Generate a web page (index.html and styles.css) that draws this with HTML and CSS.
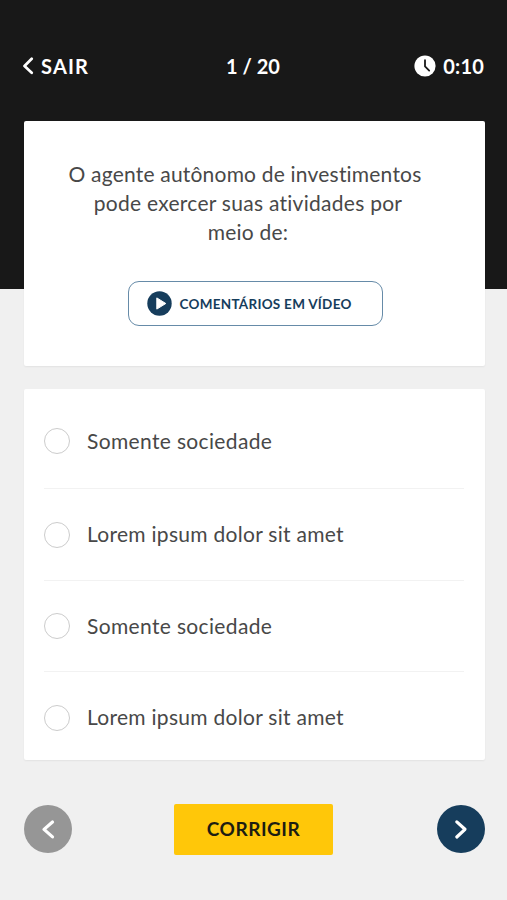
FILE: index.html
```html
<!DOCTYPE html>
<html lang="pt-BR">
<head>
<meta charset="utf-8">
<title>Simulado</title>
<link rel="stylesheet" href="styles.css">
</head>
<body>
<header class="topbar">
  <a class="exit"><svg width="12" height="18" viewBox="0 0 12 18"><path d="M9.700 1.700 2.500 9l7.200 6.800"/></svg><span class="t-exit">SAIR</span></a>
  <span class="t-count">1 / 20</span>
  <span class="timer"><svg width="22" height="22" viewBox="0 0 22 22"><circle cx="11" cy="11" r="10.6"/><path d="M11 5.2v6.2l4.2 4.2"/></svg><span class="t-time">0:10</span></span>
</header>
<main>
  <section class="card question">
    <h1><span class="q1">O agente autônomo de investimentos</span><span class="q2">pode exercer suas atividades por</span><span class="q3">meio de:</span></h1>
    <button class="video"><svg width="25" height="25" viewBox="0 0 25 25"><circle cx="12.5" cy="12.5" r="12.2"/><path d="M9.8 6.9v11.2l9-5.6z"/></svg><span class="t-video">COMENTÁRIOS EM VÍDEO</span></button>
  </section>
  <section class="card options">
    <label class="option first"><i class="radio"></i><span class="short">Somente sociedade</span></label>
    <label class="option"><i class="radio"></i><span class="long">Lorem ipsum dolor sit amet</span></label>
    <label class="option"><i class="radio"></i><span class="short">Somente sociedade</span></label>
    <label class="option last"><i class="radio"></i><span class="long">Lorem ipsum dolor sit amet</span></label>
  </section>
</main>
<footer class="actions">
  <button class="round prev"><svg width="48" height="48" viewBox="0 0 48 48"><path d="M28.500 17 20 24.400l8.500 7.500"/></svg></button>
  <button class="submit"><span class="t-submit">CORRIGIR</span></button>
  <button class="round next"><svg width="48" height="48" viewBox="0 0 48 48"><path d="M19.800 16.900 28 24.300l-8.200 7.700"/></svg></button>
</footer>
</body>
</html>
```
FILE: styles.css
```css
* { box-sizing: border-box; }
body {
  margin: 0;
  height: 900px;
  padding: 0 22px 0 24px;
  background: linear-gradient(#181818 289px, #f0f0f0 289px);
  font-family: Lato, "Noto Sans", sans-serif;
  font-variant-ligatures: none;
  color: #484848;
}
button { border: 0; padding: 0; font: inherit; background: none; }
svg { display: block; flex: none; }
span { white-space: nowrap; }
.topbar {
  height: 121px;
  padding: 53px 1px 42px 0;
  display: grid;
  grid-template-columns: 1fr auto 1fr;
  align-items: center;
  color: #fff;
  font-size: 20px;
  font-weight: 700;
  line-height: 26px;
}
.exit, .timer { display: flex; align-items: center; }
.exit { gap: 7px; margin-left: -2px; }
.exit path { fill: none; stroke: #fff; stroke-width: 2.7; stroke-linecap: round; stroke-linejoin: round; }
.t-exit { letter-spacing: 1.2px; }
.t-count { margin-right: 2px; }
.timer { justify-content: flex-end; gap: 7px; }
.t-time { letter-spacing: .2px; }
.timer circle { fill: #fff; }
.timer path { fill: none; stroke: #181818; stroke-width: 1.8; stroke-linecap: round; stroke-linejoin: round; }
.card {
  width: 461px;
  background: #fff;
  border-radius: 2px;
  box-shadow: 0 1px 2px rgba(0, 0, 0, .06);
}
.question {
  height: 245px;
  padding-top: 38px;
  display: flex;
  flex-direction: column;
  align-items: center;
}
h1 {
  margin: 0 0 35px;
  display: flex;
  flex-direction: column;
  align-items: center;
  font-size: 21px;
  font-weight: 400;
  line-height: 29px;
}
.q1 { margin-right: 19px; letter-spacing: .2px; }
.q2 { margin-right: 13px; letter-spacing: .27px; }
.q3 { margin-right: 13px; letter-spacing: .2px; }
.video {
  width: 255px;
  height: 45px;
  margin-left: 1px;
  border: 1px solid #668ba8;
  border-radius: 11px;
  padding-left: 18px;
  display: flex;
  align-items: center;
  gap: 8px;
  color: #163d5c;
  font-size: 13.5px;
  font-weight: 700;
}
.t-video { letter-spacing: .27px; }
.video circle { fill: #163d5c; }
.video path { fill: #fff; stroke: #fff; stroke-width: 1; stroke-linejoin: round; }
.options { height: 371px; margin-top: 23px; padding: 0 21px 0 20px; }
.option {
  display: flex;
  align-items: center;
  gap: 17px;
  height: 91px;
  border-bottom: 1px solid #f2f2f2;
  font-size: 21px;
  line-height: 29px;
}
.option span { padding-bottom: 2px; }
.short { letter-spacing: .35px; }
.long { letter-spacing: .28px; }
.option.first { height: 100px; padding-top: 5px; }
.option:nth-child(2) { height: 92px; }
.option.last { border: 0; }
.radio { width: 26px; height: 26px; border: 1px solid #ccc; border-radius: 50%; flex: none; }
.actions { margin-top: 44px; width: 461px; display: flex; align-items: center; justify-content: space-between; }
.round { width: 48px; height: 48px; margin-bottom: 2px; border-radius: 50%; }
.round path { fill: none; stroke: #fff; stroke-width: 3.2; stroke-linecap: round; stroke-linejoin: round; }
.prev { background: #969696; }
.next { background: #163d5c; }
.submit {
  width: 159px;
  height: 51px;
  margin-right: 2px;
  padding-bottom: 2px;
  border-radius: 2px;
  background: #ffc709;
  color: #1d1d12;
  font-size: 19px;
  font-weight: 700;
}
.t-submit { letter-spacing: .5px; }
```
